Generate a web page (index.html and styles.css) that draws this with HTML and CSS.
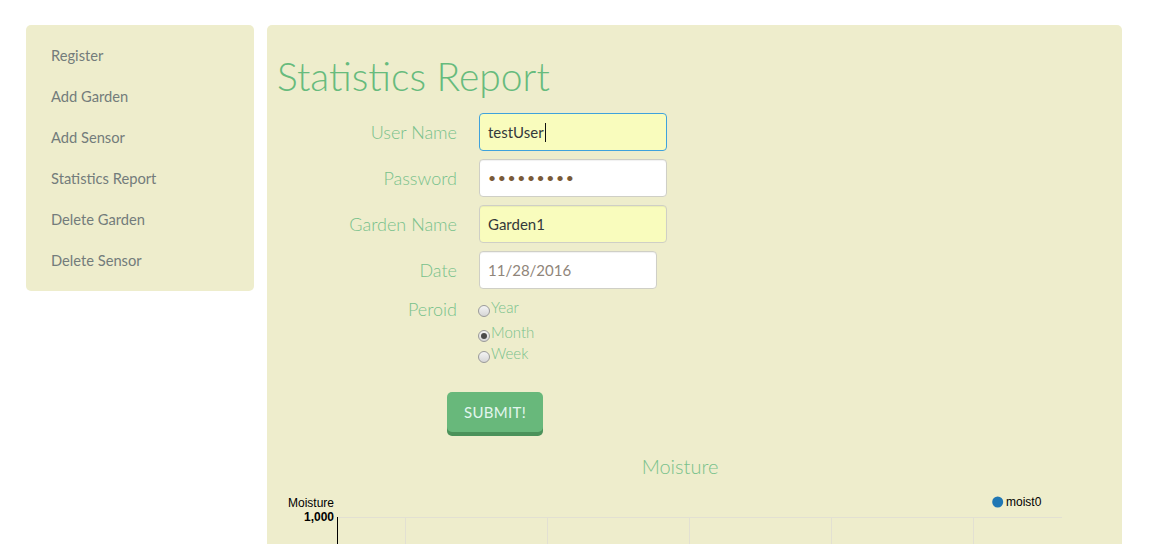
FILE: index.html
```html
<!DOCTYPE html>
<html lang="en">
<head>
<meta charset="utf-8">
<title>Statistics Report</title>
<link rel="stylesheet" href="styles.css">
</head>
<body>
<div class="layout">
  <nav class="sidebar">
    <a class="nav-item" href="#">Register</a>
    <a class="nav-item" href="#">Add Garden</a>
    <a class="nav-item" href="#">Add Sensor</a>
    <a class="nav-item" href="#">Statistics Report</a>
    <a class="nav-item" href="#">Delete Garden</a>
    <a class="nav-item" href="#">Delete Sensor</a>
  </nav>
  <main class="panel">
    <h1 class="title">Statistics Report</h1>
    <form class="form">
      <div class="row">
        <label class="label">User Name</label>
        <div class="input focused yellow">testUser<span class="caret"></span></div>
      </div>
      <div class="row">
        <label class="label">Password</label>
        <div class="input dots">•••••••••</div>
      </div>
      <div class="row">
        <label class="label">Garden Name</label>
        <div class="input yellow">Garden1</div>
      </div>
      <div class="row">
        <label class="label">Date</label>
        <div class="input date">11/28/2016</div>
      </div>
      <div class="row row-top">
        <label class="label">Peroid</label>
        <div class="radios">
          <label class="radio r-year"><span class="dot"></span>Year</label>
          <label class="radio r-month"><span class="dot checked"></span>Month</label>
          <label class="radio r-week"><span class="dot"></span>Week</label>
        </div>
      </div>
      <div class="actions">
        <button type="button" class="btn">SUBMIT!</button>
      </div>
    </form>
    <section class="chart">
      <h2 class="chart-title">Moisture</h2>
      <svg class="chart-svg" width="835" height="200" viewBox="0 0 835 200">
        <g stroke="#e2e0d2" stroke-width="1" fill="none">
          <line x1="60" y1="37.5" x2="785" y2="37.5"/>
          <line x1="128.5" y1="37" x2="128.5" y2="200"/>
          <line x1="270.5" y1="37" x2="270.5" y2="200"/>
          <line x1="412.5" y1="37" x2="412.5" y2="200"/>
          <line x1="554.5" y1="37" x2="554.5" y2="200"/>
          <line x1="696.5" y1="37" x2="696.5" y2="200"/>
        </g>
        <line x1="60.5" y1="37" x2="60.5" y2="200" stroke="#000" stroke-width="1"/>
        <text x="57" y="26.5" text-anchor="end" class="axis-label">Moisture</text>
        <text x="57" y="40.5" text-anchor="end" class="axis-tick">1,000</text>
        <circle cx="720.7" cy="22" r="5.5" fill="#1f77b4"/>
        <text x="729" y="26" class="legend">moist0</text>
      </svg>
    </section>
  </main>
</div>
</body>
</html>
```
FILE: styles.css
```css
* { box-sizing: border-box; }
html, body { margin: 0; padding: 0; background: #fff; }
body { font-family: Lato, "Open Sans", sans-serif; }

.layout {
  display: flex;
  align-items: flex-start;
  gap: 13px;
  padding: 25px 0 0 26px;
}

.sidebar {
  width: 228px;
  background: #eeedcc;
  border-radius: 5px;
  padding: 10px 0 10px 25px;
  display: flex;
  flex-direction: column;
}
.nav-item {
  display: block;
  height: 41px;
  line-height: 41px;
  font-size: 14.7px;
  color: #737c7b;
  text-decoration: none;
}

.panel {
  width: 855px;
  min-height: 620px;
  background: #eeedcc;
  border-radius: 5px;
  padding: 28px 10px 0 10px;
}

.title {
  margin: 0 0 13px 0;
  font-size: 39px;
  line-height: 47px;
  font-weight: 300;
  color: #67bb7d;
}

.form { display: flex; flex-direction: column; }
.row {
  display: grid;
  grid-template-columns: 180px auto;
  column-gap: 22px;
  align-items: center;
  margin-bottom: 8px;
}
.row-top { align-items: start; margin-bottom: 0; margin-top: 1px; }
.label {
  text-align: right;
  font-size: 18px;
  line-height: 22px;
  font-weight: 300;
  color: #78c18b;
}
.input {
  width: 188px;
  height: 38px;
  border: 1px solid #cfcfc6;
  border-radius: 4px;
  background: #fff;
  box-shadow: inset 0 1px 1px rgba(0,0,0,0.06);
  padding: 0 8px;
  font-size: 15px;
  line-height: 36px;
  color: #34393a;
  display: flex;
  align-items: center;
}
.yellow { background: #f9fcbd; }
.focused { border-color: #3fa2dc; box-shadow: none; }
.caret { display: inline-block; width: 1px; height: 19px; background: #111; margin-left: 1px; }
.dots { color: #7a5a38; letter-spacing: 1.6px; font-size: 14px; }
.date { width: 178px; height: 38px; color: #8f857a; }

.radios { display: flex; flex-direction: column; }
.radio {
  display: flex;
  align-items: flex-start;
  font-size: 15px;
  line-height: 18px;
  font-weight: 300;
  color: #78c18b;
  margin-left: -1px;
}
.r-month { margin-top: 6px; }
.r-week { margin-top: 2px; }
.dot {
  width: 12px;
  height: 12px;
  margin-top: 7px;
  margin-right: 1px;
  border-radius: 50%;
  border: 1px solid #9a9a9a;
  background: linear-gradient(#f4f4f4, #d6d6d6);
  display: flex;
  align-items: center;
  justify-content: center;
}
.dot.checked::after {
  content: "";
  width: 6px;
  height: 6px;
  border-radius: 50%;
  background: #4a4a4a;
}

.actions { margin: 29px 0 0 170px; }
.btn {
  width: 96px;
  height: 40px;
  border: 0;
  border-radius: 5px;
  background: #68b87b;
  box-shadow: 0 4px 0 #4b925a;
  color: #e2f6ee;
  font-family: Lato, sans-serif;
  font-size: 15px;
  font-weight: 400;
  letter-spacing: 0.3px;
  padding: 0;
}

.chart { margin-top: 22px; }
.chart-title {
  margin: 0 29px 0 0;
  text-align: center;
  font-size: 20px;
  line-height: 24px;
  font-weight: 300;
  color: #78c18b;
}
.chart-svg { display: block; margin-top: 2px; }
.axis-label, .legend { font-family: "Liberation Sans", Arial, sans-serif; font-size: 12px; fill: #000; }
.axis-tick { font-family: "Liberation Sans", Arial, sans-serif; font-size: 12px; font-weight: bold; fill: #000; }
```
